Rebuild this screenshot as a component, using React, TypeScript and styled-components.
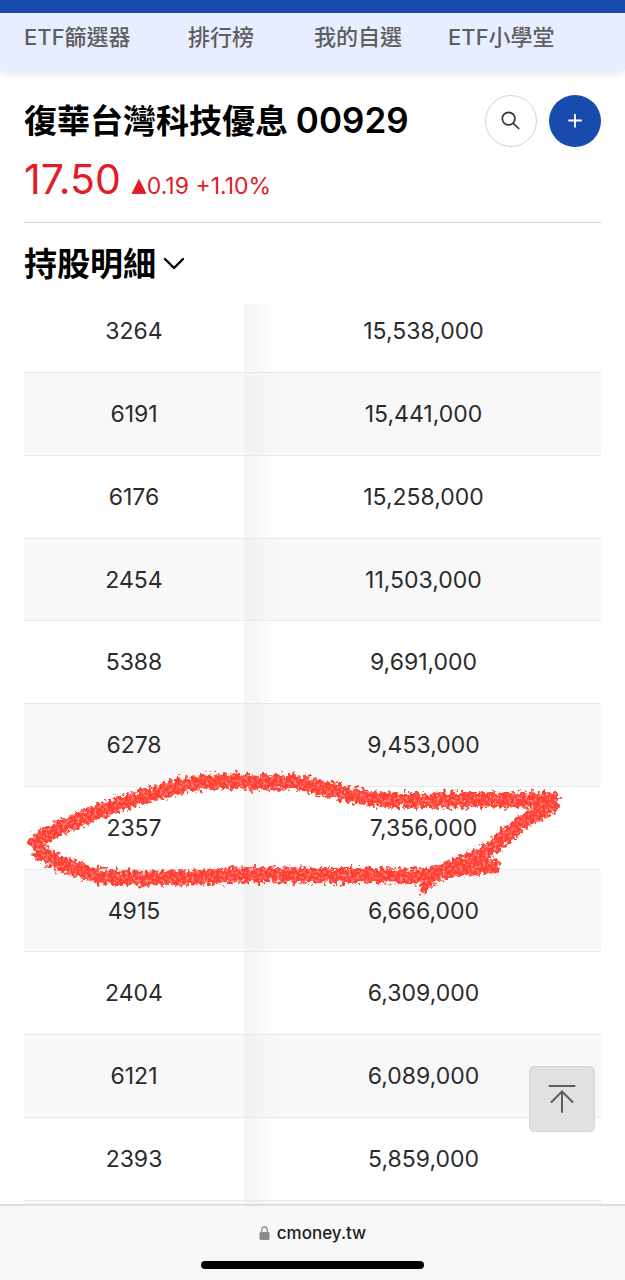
import React from "react";
import styled, { createGlobalStyle } from "styled-components";

const GlobalStyle = createGlobalStyle`
  *, *::before, *::after { box-sizing: border-box; }
  body {
    margin: 0;
    background: #fff;
    color: #000;
    font-family: Inter, "Noto Sans CJK TC", sans-serif;
  }
  button { font: inherit; color: inherit; padding: 0; cursor: pointer; }
  h1, h2, p { margin: 0; }
`;

const Page = styled.div`
  position: relative;
  display: flex;
  flex-direction: column;
  height: 100vh;
  overflow: hidden;
`;

const StatusStrip = styled.div`
  flex: none;
  height: 13px;
  background: #194bad;
`;

const Nav = styled.nav`
  flex: none;
  display: grid;
  grid-template-columns: 164px 126px 134px 1fr;
  height: 58px;
  padding: 8px 24px 0;
  background: #e7eeff;
  box-shadow: 0 2px 10px rgba(0, 0, 0, 0.12);
`;

const NavLink = styled.a`
  color: #5f5f5f;
  font-size: 22px;
  font-weight: 500;
  line-height: 32px;
  white-space: nowrap;
  text-decoration: none;
`;

const Header = styled.header`
  flex: none;
  margin: 0 24px;
  padding-top: 23px;
  height: 152px;
  border-bottom: 1px solid #d2d2d2;
`;

const TitleRow = styled.div`
  display: flex;
  align-items: center;
  gap: 12px;
`;

const Title = styled.h1`
  flex: 1;
  font-size: 33px;
  font-weight: 700;
  line-height: 52px;
  white-space: nowrap;
`;

const FundCode = styled.span`
  font-size: 35px;
  font-weight: 600;
`;

const RoundButton = styled.button<{ $primary?: boolean }>`
  display: flex;
  align-items: center;
  justify-content: center;
  width: 52px;
  height: 52px;
  border-radius: 50%;
  border: ${(p) => (p.$primary ? "none" : "1px solid #d2d2d2")};
  background: ${(p) => (p.$primary ? "#194bad" : "#fff")};
  color: ${(p) => (p.$primary ? "#fff" : "#333")};
`;

const Quote = styled.p`
  display: flex;
  align-items: baseline;
  gap: 10px;
  margin-top: 7px;
  color: #e31b26;
  line-height: 50px;
`;

const Price = styled.span`
  font-size: 41px;
`;

const Change = styled.span`
  font-size: 23px;
`;

const SectionTitle = styled.h2`
  flex: none;
  height: 81px;
  padding: 0 24px;
  font-size: 33px;
  font-weight: 700;
  line-height: 82px;
`;

const SectionToggle = styled.button`
  display: flex;
  align-items: center;
  gap: 7px;
  border: none;
  background: none;
  line-height: inherit;
`;

const Holdings = styled.main`
  flex: 1;
  min-height: 0;
  padding: 0 24px;
  overflow: hidden;
`;

const Table = styled.table`
  width: 100%;
  margin-top: -14px;
  table-layout: fixed;
  border-collapse: separate;
  border-spacing: 0;
  color: #2b2b2b;
  font-size: 23px;
  text-align: center;
`;

const CodeColumn = styled.col`
  width: 220px;
`;

const Row = styled.tr`
  height: 83px;
  &:nth-child(4n) { height: 82px; }
  &:nth-child(even) { background: #f8f8f8; }
`;

const Code = styled.th`
  padding: 0;
  border-bottom: 1px solid #e9e9e9;
  font-weight: 400;
`;

const Shares = styled.td`
  padding: 0 0 0 2px;
  border-bottom: 1px solid #e9e9e9;
  background: linear-gradient(to right, rgba(0, 0, 0, 0.04), rgba(0, 0, 0, 0.03) 14px, rgba(0, 0, 0, 0.01) 24px, rgba(0, 0, 0, 0) 36px) no-repeat;
  ${Row}:nth-child(even) & {
    background: linear-gradient(to right, rgba(0, 0, 0, 0.025), rgba(0, 0, 0, 0.02) 14px, rgba(0, 0, 0, 0) 34px) no-repeat;
  }
`;

const Scribble = styled.svg`
  position: absolute;
  left: 0;
  top: 760px;
  pointer-events: none;
`;

const TopButton = styled.button`
  position: absolute;
  right: 30px;
  bottom: 148px;
  display: flex;
  align-items: center;
  justify-content: center;
  width: 66px;
  height: 66px;
  border: 1px solid #d6d6d6;
  border-radius: 5px;
  background: #e1e1e1;
  color: #5f5f5f;
`;

const BrowserBar = styled.footer`
  flex: none;
  display: flex;
  flex-direction: column;
  align-items: center;
  gap: 15px;
  height: 76px;
  padding-top: 14px;
  border-top: 2px solid #dedede;
  background: #f8f8f8;
`;

const Address = styled.div`
  display: flex;
  align-items: center;
  gap: 7px;
  color: #1c1c1c;
  font-size: 17px;
  font-weight: 500;
  line-height: 26px;
`;

const HomeIndicator = styled.div`
  width: 223px;
  height: 8px;
  border-radius: 4px;
  background: #000;
`;

const links = ["ETF篩選器", "排行榜", "我的自選", "ETF小學堂"];

const holdings = [
  ["3264", "15,538,000"],
  ["6191", "15,441,000"],
  ["6176", "15,258,000"],
  ["2454", "11,503,000"],
  ["5388", "9,691,000"],
  ["6278", "9,453,000"],
  ["2357", "7,356,000"],
  ["4915", "6,666,000"],
  ["2404", "6,309,000"],
  ["6121", "6,089,000"],
  ["2393", "5,859,000"],
  ["", ""],
];

function CrayonCircle() {
  return (
    <Scribble width="600" height="140" viewBox="0 760 600 140" aria-hidden="true">
      <defs>
        <filter id="crayon" x="0" y="760" width="600" height="140" filterUnits="userSpaceOnUse" colorInterpolationFilters="sRGB">
          <feTurbulence type="fractalNoise" baseFrequency="0.26" numOctaves="2" seed="7" result="noise" />
          <feDisplacementMap in="SourceGraphic" in2="noise" scale="13" xChannelSelector="R" yChannelSelector="G" result="rough" />
          <feGaussianBlur in="rough" stdDeviation="0.7" result="soft" />
          <feTurbulence type="fractalNoise" baseFrequency="0.35" numOctaves="2" seed="3" />
          <feColorMatrix type="matrix" values="0 0 0 0 0  0 0 0 0 0  0 0 0 0 0  3 0 0 0 -0.6" result="grain" />
          <feComposite in="soft" in2="grain" operator="in" result="grained" />
          <feComponentTransfer in="soft" result="base">
            <feFuncA type="linear" slope="0.5" />
          </feComponentTransfer>
          <feMerge>
            <feMergeNode in="base" />
            <feMergeNode in="grained" />
          </feMerge>
        </filter>
      </defs>
      <g filter="url(#crayon)" fill="none" stroke="#ff3d30" strokeWidth="15" strokeLinecap="round" strokeLinejoin="round">
        <path d="M37 840 C50 834 62 826 77 820 C100 812 112 804 140 798 C163 792 180 783 205 782 C230 780 250 782 267 783 C283 780 298 781 315 786 C340 793 360 798 385 800 C420 802 470 798 500 800 C520 800 540 800 551 799" />
        <path d="M37 840 C37 853 47 856 58 862 C77 870 95 877 120 878 C150 878 180 879 205 877 C230 875 265 874 290 875 C330 876 380 875 415 876 C430 876 450 870 465 867" />
        <path d="M552 800 C554 807 540 812 530 818 C515 826 505 837 492 847 C475 861 455 865 443 871 C437 873 431 877 428 881" />
        <path d="M430 877 C445 869 475 866 493 866" />
        <path strokeWidth="6" d="M424 880 L424 891" />
      </g>
    </Scribble>
  );
}

export default function App() {
  return (
    <>
      <GlobalStyle />
      <Page>
        <StatusStrip />
        <Nav>
          {links.map((label) => (
            <NavLink href="#" key={label}>{label}</NavLink>
          ))}
        </Nav>
        <Header>
          <TitleRow>
            <Title>復華台灣科技優息 <FundCode>00929</FundCode></Title>
            <RoundButton type="button" aria-label="搜尋">
              <svg width="20" height="20" viewBox="0 0 20 20" fill="none" stroke="currentColor" strokeWidth="1.7">
                <circle cx="7.6" cy="7.6" r="6.3" />
                <path d="M12.1 12.1 L18.2 18" />
              </svg>
            </RoundButton>
            <RoundButton type="button" $primary aria-label="加入自選">
              <svg width="14" height="14" viewBox="0 0 14 14" stroke="currentColor" strokeWidth="1.8">
                <path d="M7 0 V13.5 M0.3 6.5 H13.7" />
              </svg>
            </RoundButton>
          </TitleRow>
          <Quote>
            <Price>17.50</Price>
            <Change>
              <svg width="16" height="15" viewBox="0 0 16 15" fill="currentColor" aria-hidden="true">
                <path d="M8 0.5 L15 14.5 H1 Z" stroke="currentColor" strokeWidth="0.8" strokeLinejoin="round" />
              </svg>
              0.19 +1.10%
            </Change>
          </Quote>
        </Header>
        <SectionTitle>
          <SectionToggle type="button">
            持股明細
            <svg width="22" height="14" viewBox="0 0 22 14" fill="none" stroke="currentColor" strokeWidth="2.4" strokeLinecap="round" strokeLinejoin="round">
              <path d="M2 2 L11 11 L20 2" />
            </svg>
          </SectionToggle>
        </SectionTitle>
        <Holdings>
          <Table>
            <colgroup>
              <CodeColumn />
              <col />
            </colgroup>
            <tbody>
              {holdings.map(([code, shares], i) => (
                <Row key={i}>
                  <Code scope="row">{code}</Code>
                  <Shares>{shares}</Shares>
                </Row>
              ))}
            </tbody>
          </Table>
        </Holdings>
        <BrowserBar>
          <Address>
            <svg width="11" height="14" viewBox="0 0 11 14" aria-hidden="true">
              <rect x="0.5" y="6" width="10" height="8" rx="1.3" fill="#8a898e" />
              <path d="M2.7 6.5 V3.8 A2.8 2.8 0 0 1 8.3 3.8 V6.5" fill="none" stroke="#8a898e" strokeWidth="1.3" />
            </svg>
            cmoney.tw
          </Address>
          <HomeIndicator />
        </BrowserBar>
        <CrayonCircle />
        <TopButton type="button" aria-label="回到頂端">
          <svg width="28" height="30" viewBox="0 0 28 30" fill="none" stroke="currentColor" strokeWidth="2" strokeLinecap="round">
            <path d="M1.5 2 H26.5 M14 28 V7.5 M3.5 18 L14 7.5 L24.5 18" />
          </svg>
        </TopButton>
      </Page>
    </>
  );
}
